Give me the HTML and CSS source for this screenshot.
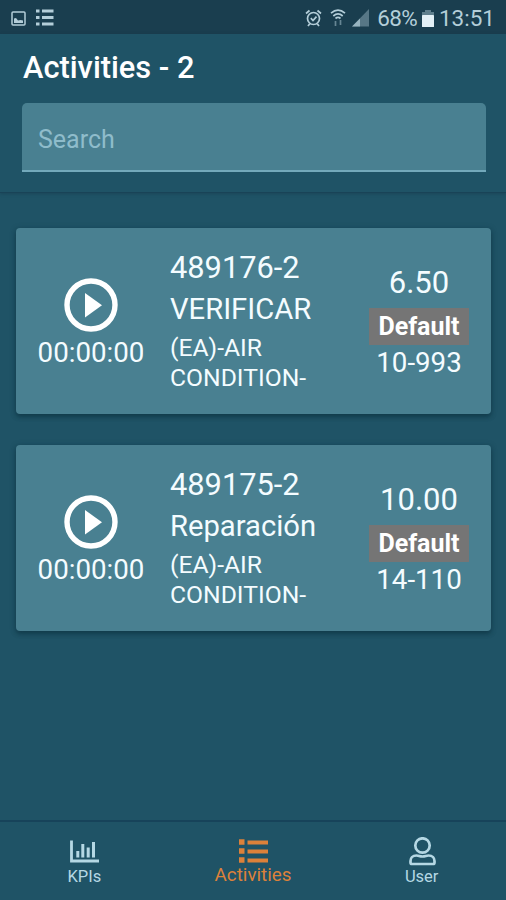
FILE: index.html
```
<!DOCTYPE html>
<html lang="en">
<head>
  <meta charset="utf-8">
  <title>Activities</title>
  <link rel="stylesheet" href="styles.css">
</head>
<body>
  <div class="status-bar">
    <svg class="status-image" width="15" height="15" viewBox="0 0 15 15">
      <rect x="1" y="1" width="13" height="13" rx="1" fill="none" stroke="currentColor" stroke-width="1.5"/>
      <path d="M3 12V7.500l2-.5 2 2.500 2.500-.500 2.500.500V12z" fill="currentColor"/>
    </svg>
    <svg class="status-list" width="18" height="17" viewBox="0 0 18 17">
      <path d="M0 2h3.500M6 2h11.500M0 8.500h3.500M6 8.500h11.500M0 15h3.500M6 15h11.500" stroke="currentColor" stroke-width="2.800"/>
    </svg>
    <div class="status-right">
      <svg width="17" height="18" viewBox="0 0 17 18" fill="none" stroke="currentColor" stroke-width="1.700">
        <circle cx="8.500" cy="9.500" r="6"/>
        <path d="M1 4.500l3.500-3M16 4.500l-3.500-3M3 17l1.800-2.300M14 17l-1.800-2.300M5.800 9.200l2.200 2.300 3.500-3.800"/>
      </svg>
      <svg class="status-wifi" width="16" height="18" viewBox="0 0 16 18" fill="none" stroke="currentColor" stroke-width="1.700">
        <path d="M1 4.200Q8-1.800 15 4.200M3.300 7Q8 2.800 12.700 7M5.500 9.500Q8 7.300 10.500 9.500"/>
        <path d="M5.500 12v5M10.500 11v5" opacity="0.500"/>
      </svg>
      <svg class="status-signal" width="17" height="18" viewBox="0 0 17 18" fill="currentColor">
        <path d="M0 17.500L17 0v17.500z" opacity="0.400"/>
        <path d="M0 17.500L8 9.500v8z" opacity="0.700"/>
      </svg>
      <span class="percent">68%</span>
      <svg class="status-battery" width="12" height="17" viewBox="0 0 12 17" fill="currentColor">
        <path d="M0 5V2h3V0h6v2h3v3z" opacity="0.450"/>
        <rect y="5" width="12" height="12" rx="0.500" fill="#e3f0f6"/>
      </svg>
      <span>13:51</span>
    </div>
  </div>

  <header class="header">
    <h1>Activities - 2</h1>
    <input class="search" type="text" placeholder="Search">
  </header>

  <main class="content">
    <div class="card">
      <div class="timer">
        <svg width="54" height="54" viewBox="0 0 54 54">
          <circle cx="27" cy="27" r="24" fill="none" stroke="#fff" stroke-width="5.400"/>
          <path d="M21 15v24.500L38 27.200z" fill="#fff"/>
        </svg>
        <span class="time">00:00:00</span>
      </div>
      <div class="info">
        <div class="code">489176-2</div>
        <div class="name">VERIFICAR</div>
        <div class="desc">(EA)-AIR CONDITION-</div>
      </div>
      <div class="detail">
        <span class="hours">6.50</span>
        <span class="badge">Default</span>
        <span class="ref">10-993</span>
      </div>
    </div>

    <div class="card">
      <div class="timer">
        <svg width="54" height="54" viewBox="0 0 54 54">
          <circle cx="27" cy="27" r="24" fill="none" stroke="#fff" stroke-width="5.400"/>
          <path d="M21 15v24.500L38 27.200z" fill="#fff"/>
        </svg>
        <span class="time">00:00:00</span>
      </div>
      <div class="info">
        <div class="code">489175-2</div>
        <div class="name">Reparación</div>
        <div class="desc">(EA)-AIR CONDITION-</div>
      </div>
      <div class="detail">
        <span class="hours">10.00</span>
        <span class="badge">Default</span>
        <span class="ref">14-110</span>
      </div>
    </div>
  </main>

  <nav class="tabs">
    <a class="tab">
      <svg width="30" height="30" viewBox="0 0 30 30" fill="none" stroke="currentColor">
        <path d="M2.500 3.500v20.500H30" stroke-width="2.800"/>
        <path d="M8.800 14V20.500M13.800 7V20.500M19.200 10.500V20.500M24.500 5V20.500" stroke-width="3"/>
      </svg>
      <span>KPIs</span>
    </a>
    <a class="tab active">
      <svg width="30" height="30" viewBox="0 0 30 30" fill="none" stroke="currentColor">
        <path d="M1 5h5.500M1 14h5.500M1 23h5.500" stroke-width="5.500"/>
        <path d="M9.500 5.500H30M9.500 14.500H30M9.500 23.500H30" stroke-width="3.800"/>
      </svg>
      <span>Activities</span>
    </a>
    <a class="tab">
      <svg width="30" height="30" viewBox="0 0 30 30" fill="none" stroke="currentColor" stroke-width="2.700">
        <circle cx="15.500" cy="8.500" r="7.200"/>
        <path d="M9.500 18.500c2.500 0 3 1 6 1s3.500-1 6-1c4 0 6 2.500 6 5.500v1.500q0 1.500-1.500 1.500h-21q-1.500 0-1.500-1.500v-1.500c0-3 2-5.500 6-5.500z"/>
      </svg>
      <span>User</span>
    </a>
  </nav>
</body>
</html>
```
FILE: styles.css
```
* {
  box-sizing: border-box;
}

body {
  margin: 0;
  height: 900px;
  display: flex;
  flex-direction: column;
  overflow: hidden;
  background-color: #1f5366;
  color: #f4fcff;
  font-family: Roboto, sans-serif;
}

.status-bar {
  display: flex;
  align-items: center;
  height: 34px;
  padding: 2px 11px 0;
  background-color: #1a3e4f;
  color: #b4ced9;
  font-size: 22.5px;
}

.status-list {
  margin: -1px 0 0 10px;
}

.status-right {
  display: flex;
  align-items: center;
  margin-left: auto;
}

.status-right svg {
  margin-top: -1px;
}

.status-right .status-wifi {
  margin-left: 8px;
}

.status-right .status-signal {
  margin: 0 8px 0 6px;
}

.status-right .status-battery {
  margin: 0 5px 0 5px;
}

.percent {
  letter-spacing: -0.7px;
}

.header {
  height: 159px;
  padding: 14px 20px 0 22px;
  border-bottom: 1px solid #194357;
  box-shadow: 0 1px 3px rgba(20, 50, 70, 0.4);
}

h1 {
  margin: 0 0 15px 1px;
  font-size: 30.8px;
  font-weight: 500;
  line-height: 40px;
  color: #fff;
}

.search {
  display: block;
  width: 100%;
  height: 69px;
  padding: 5px 16px 0;
  border: none;
  border-bottom: 2px solid #73a9bb;
  border-radius: 5px 5px 0 0;
  background-color: #498091;
  color: #fff;
  font-family: inherit;
  font-size: 25px;
}

.search::placeholder {
  color: #8fbccb;
  opacity: 1;
}

.content {
  flex: 1;
  padding: 35px 15px 0 16px;
}

.card {
  display: flex;
  height: 186px;
  margin-bottom: 31px;
  border-radius: 4px;
  background-color: #498091;
  box-shadow: 0 3px 4px rgba(10, 45, 60, 0.5), 0 1px 6px rgba(10, 45, 60, 0.3);
}

.timer,
.detail {
  display: flex;
  flex-direction: column;
  align-items: center;
}

.timer {
  width: 150px;
  padding-top: 50px;
}

.time {
  margin-top: 3px;
  font-size: 27.7px;
  line-height: 36px;
}

.info {
  width: 181px;
  padding: 19px 0 0 4px;
}

.code {
  font-size: 30.8px;
  line-height: 42px;
}

.name {
  font-size: 29.2px;
  line-height: 40px;
}

.desc {
  width: 150px;
  margin-top: 4px;
  font-size: 24.7px;
  line-height: 30px;
}

.detail {
  width: 144px;
  padding-top: 37px;
}

.hours {
  font-size: 31px;
  line-height: 36px;
}

.badge {
  width: 100px;
  height: 37px;
  margin-top: 7px;
  background-color: #757575;
  color: #fff;
  font-size: 25px;
  font-weight: 700;
  line-height: 38px;
  text-align: center;
}

.ref {
  font-size: 27.7px;
  line-height: 36px;
}

.tabs {
  display: flex;
  height: 80px;
  border-top: 2px solid #17435a;
}

.tab {
  flex: 1;
  display: flex;
  flex-direction: column;
  align-items: center;
  padding-top: 15px;
  color: #b5d8e4;
  font-size: 16.5px;
  line-height: 20px;
}

.active {
  color: #dc813a;
  font-size: 18.8px;
}

.active span {
  margin-top: -2px;
}
```
